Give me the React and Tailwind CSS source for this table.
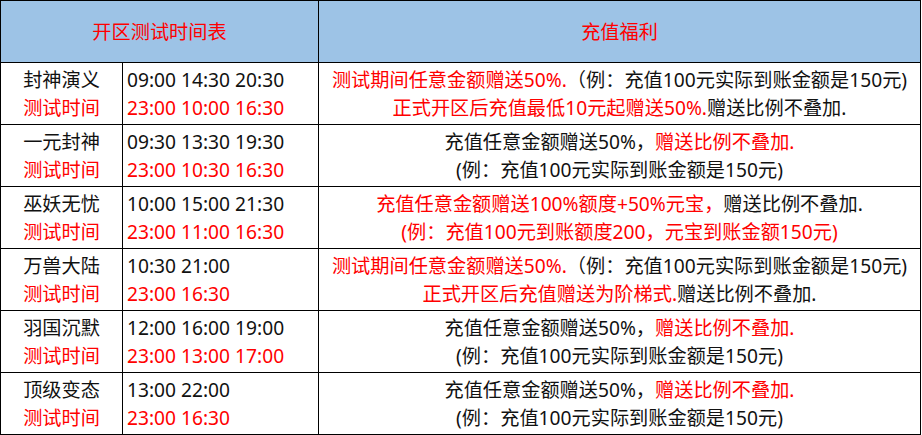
import React from 'react';

const rows = [
  {
    name: '封神演义',
    open: '09:00 14:30 20:30',
    test: '23:00 10:00 16:30',
    lines: [
      [['测试期间任意金额赠送50%.', true], ['（例：充值100元实际到账金额是150元)', false]],
      [['正式开区后充值最低10元起赠送50%.', true], ['赠送比例不叠加.', false]],
    ],
  },
  {
    name: '一元封神',
    open: '09:30 13:30 19:30',
    test: '23:00 10:30 16:30',
    lines: [
      [['充值任意金额赠送50%，', false], ['赠送比例不叠加.', true]],
      [['(例：充值100元实际到账金额是150元)', false]],
    ],
  },
  {
    name: '巫妖无忧',
    open: '10:00 15:00 21:30',
    test: '23:00 11:00 16:30',
    lines: [
      [['充值任意金额赠送100%额度+50%元宝，', true], ['赠送比例不叠加.', false]],
      [['(例：充值100元到账额度200，元宝到账金额150元)', true]],
    ],
  },
  {
    name: '万兽大陆',
    open: '10:30 21:00',
    test: '23:00 16:30',
    lines: [
      [['测试期间任意金额赠送50%.', true], ['（例：充值100元实际到账金额是150元)', false]],
      [['正式开区后充值赠送为阶梯式.', true], ['赠送比例不叠加.', false]],
    ],
  },
  {
    name: '羽国沉默',
    open: '12:00 16:00 19:00',
    test: '23:00 13:00 17:00',
    lines: [
      [['充值任意金额赠送50%，', false], ['赠送比例不叠加.', true]],
      [['(例：充值100元实际到账金额是150元)', false]],
    ],
  },
  {
    name: '顶级变态',
    open: '13:00 22:00',
    test: '23:00 16:30',
    lines: [
      [['充值任意金额赠送50%，', false], ['赠送比例不叠加.', true]],
      [['(例：充值100元实际到账金额是150元)', false]],
    ],
  },
];

export default function App() {
  return (
    <div
      className="bg-white w-[922px] h-[435px] text-[19.2px] leading-[28px] text-[#111]"
      style={{ fontFamily: '"Noto Sans", "Noto Sans CJK SC", sans-serif' }}
    >
      <div className="grid grid-cols-[121px_195px_601px] grid-rows-[repeat(7,61px)] gap-px p-px bg-black w-[921px]">
        {/* header */}
        <div className="col-span-2 bg-[#9dc3e6] flex items-center justify-center text-[#ff0000]">
          开区测试时间表
        </div>
        <div className="bg-[#9dc3e6] flex items-center justify-center text-[#ff0000]">充值福利</div>

        {rows.map((row) => (
          <React.Fragment key={row.name}>
            <div className="bg-white flex flex-col items-center justify-center">
              <span>{row.name}</span>
              <span className="text-[#ff0000]">测试时间</span>
            </div>
            <div className="bg-white flex flex-col justify-center pl-[4px]">
              <span>{row.open}</span>
              <span className="text-[#ff0000]">{row.test}</span>
            </div>
            <div className="bg-white flex flex-col items-center justify-center whitespace-nowrap">
              {row.lines.map((line, i) => (
                <div key={i}>
                  {line.map(([text, red], j) => (
                    <span key={j} className={red ? 'text-[#ff0000]' : ''}>
                      {text}
                    </span>
                  ))}
                </div>
              ))}
            </div>
          </React.Fragment>
        ))}
      </div>
    </div>
  );
}
